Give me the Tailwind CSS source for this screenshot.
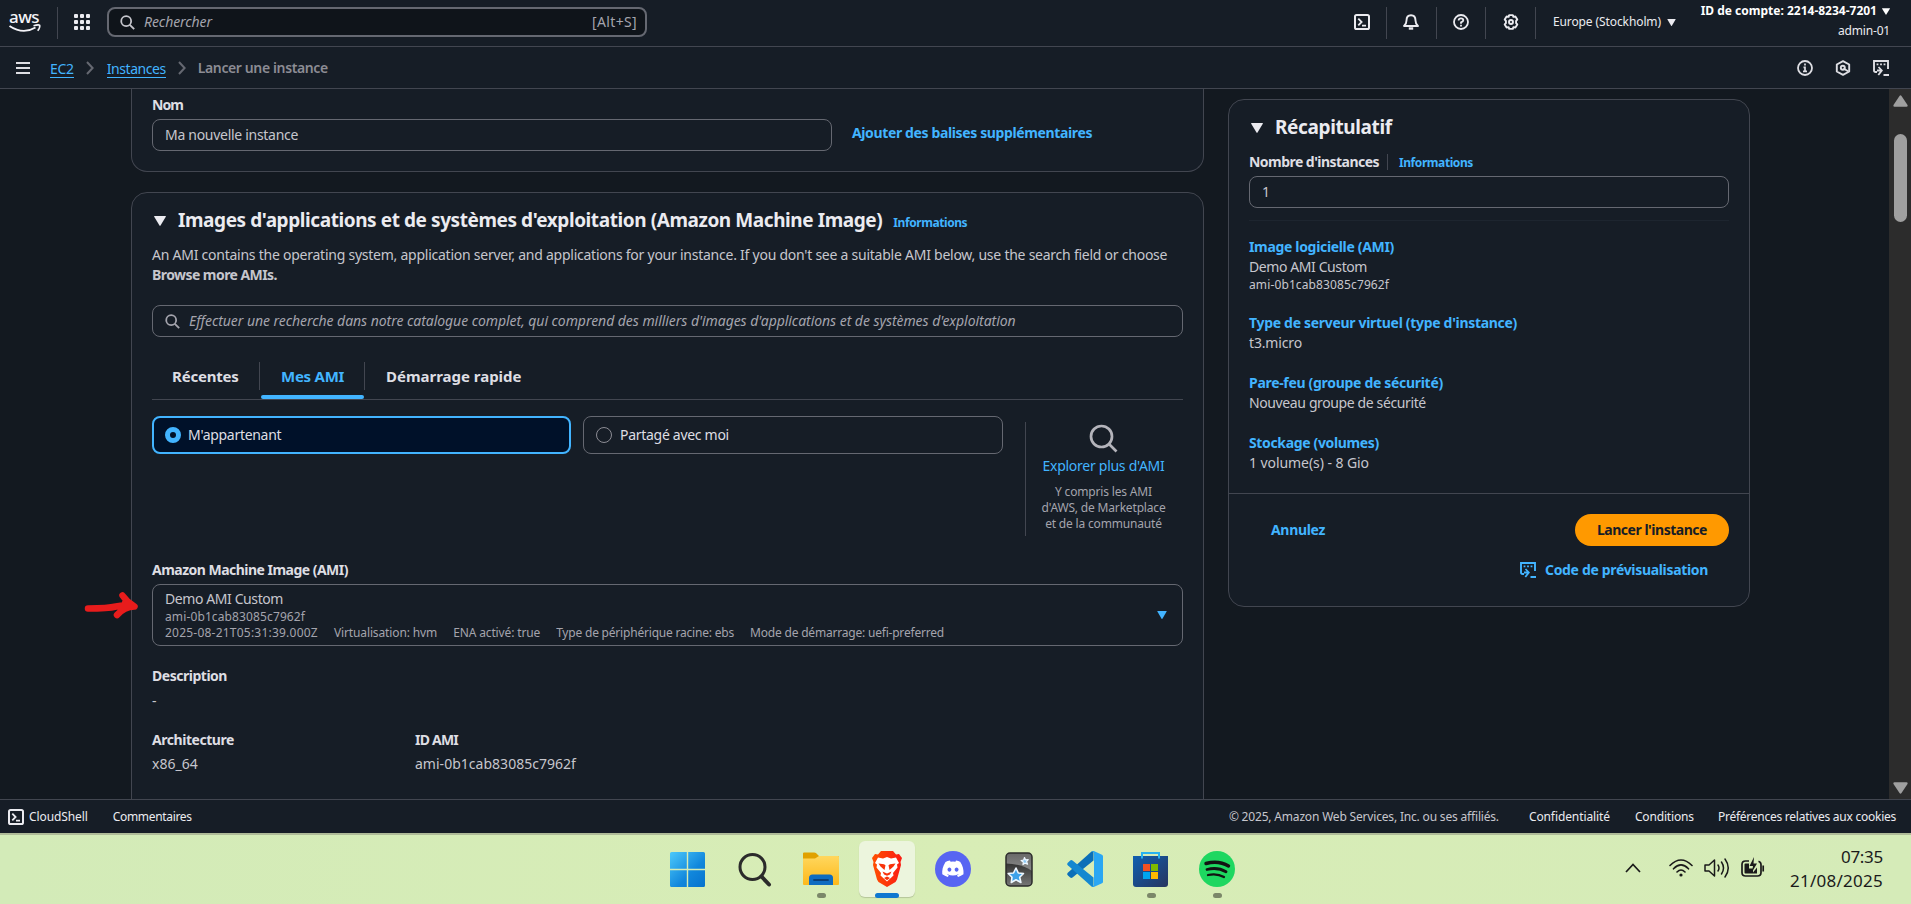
<!DOCTYPE html>
<html lang="fr">
<head>
<meta charset="utf-8">
<title>Lancer une instance | EC2</title>
<script src="https://cdn.jsdelivr.net/npm/@tailwindcss/browser@4"></script>
</head>
<body class="w-[1911px] h-[904px] overflow-hidden bg-[#131920] font-['Noto_Sans','Open_Sans',sans-serif] text-[14px] leading-5 text-[#c6c6cd] whitespace-nowrap">
<svg class="hidden">
  <defs>
    <symbol id="shell" viewBox="0 0 16 16"><rect x="1" y="1" width="14" height="14" rx="1.6" fill="none" stroke="currentColor" stroke-width="2"/><path d="M4.300 4.600 7.600 8l-3.300 3.400M8 11.600h4" fill="none" stroke="currentColor" stroke-width="1.800"/></symbol>
    <symbol id="glass" viewBox="0 0 16 16"><circle cx="6.600" cy="6.600" r="5.300" fill="none" stroke="currentColor" stroke-width="1.900"/><path d="m10.500 10.500 4.600 4.600" stroke="currentColor" stroke-width="2"/></symbol>
    <symbol id="tri" viewBox="0 0 12 10"><path d="M.6 0h10.800q.8 0 .4.700L6.500 9.600q-.5.700-1 0L.2.700Q-.2 0 .6 0z" fill="currentColor"/></symbol>
    <symbol id="code" viewBox="0 0 16 16"><path d="M4 12H2.500Q1 12 1 10.500V1h14v8" fill="none" stroke="currentColor" stroke-width="1.900"/><path d="M3.600 3.500h1.800v1.800H3.600zM7.100 3.500h1.800v1.800H7.100zM10.600 3.500h1.800v1.800h-1.800z" fill="currentColor"/><path d="M4 10.500h5M5.500 7l3.300 3.500L5.300 15" fill="none" stroke="currentColor" stroke-width="1.800"/><path d="M10.500 15H16" stroke="currentColor" stroke-width="2"/></symbol>
    <symbol id="chev" viewBox="0 0 8 14"><path d="m1 1 5.600 6L1 13" fill="none" stroke="currentColor" stroke-width="2"/></symbol>
  </defs>
</svg>

<header class="h-[47px] flex items-center border-b border-[#424650] bg-[#161d26] text-[#ebebf0]">
  <div class="relative ml-2 w-[34px] h-[36px] shrink-0">
    <span class="block pl-px text-[17px] leading-6 font-medium tracking-[-0.55px] text-[#f4f4f8]">aws</span>
    <svg class="absolute left-0 top-[16px] w-[34px] h-[14px]" viewBox="0 14 34 14"><path d="M1.500 19Q15 28 27.500 20.500" fill="none" stroke="#f4f4f8" stroke-width="1.900"/><path d="M25.500 18.800q5-1.500 6.200-.5.600 2-2 5.500" fill="none" stroke="#f4f4f8" stroke-width="1.600"/></svg>
  </div>
  <div class="ml-[15px] w-px h-8 bg-[#424650]"></div>
  <div class="ml-4 -mt-[2px] grid grid-cols-3 gap-[2px]">
    <i class="size-1 bg-current rounded-[1px]"></i><i class="size-1 bg-current rounded-[1px]"></i><i class="size-1 bg-current rounded-[1px]"></i><i class="size-1 bg-current rounded-[1px]"></i><i class="size-1 bg-current rounded-[1px]"></i><i class="size-1 bg-current rounded-[1px]"></i><i class="size-1 bg-current rounded-[1px]"></i><i class="size-1 bg-current rounded-[1px]"></i><i class="size-1 bg-current rounded-[1px]"></i>
  </div>
  <div class="ml-[17px] -mt-[2px] w-[540px] h-[30px] rounded-lg border-2 border-[#656871] bg-[#0f141a] flex items-center pl-[11px] pr-2">
    <svg class="size-[15px] text-[#c6c6cd]"><use href="#glass"/></svg>
    <span class="ml-[9px] italic text-[#a4a4ad] tracking-[-0.07px]">Rechercher</span>
    <span class="ml-auto text-[#a4a4ad] tracking-[0.35px]">[Alt+S]</span>
  </div>
  <div class="ml-auto flex items-center h-full">
    <svg class="size-4 mr-4 -mt-[2px]"><use href="#shell"/></svg><div class="w-px h-8 bg-[#424650]"></div>
    <svg class="size-4 ml-4 mr-4 -mt-[2px]" viewBox="0 0 16 16" fill="none" stroke="currentColor" stroke-width="1.900"><path d="M1 12h14q-2.500-2-2.500-5.500C12.500 3 11 1.200 8 1.200S3.500 3 3.500 6.500Q3.500 10 1 12z" stroke-linejoin="round"/><path d="M5.800 14.500h4.400" stroke-width="2.400"/></svg><div class="ml-px w-px h-8 bg-[#424650]"></div>
    <svg class="size-4 ml-4 mr-4 -mt-[2px]" viewBox="0 0 16 16" fill="none" stroke="currentColor" stroke-width="1.800"><circle cx="8" cy="8" r="7"/><path d="M5.600 6.500Q5.700 4.400 8 4.400t2.300 1.900Q10.300 7.500 8 8.300V9.700"/><path d="M7.100 10.800h1.800v1.600H7.100z" fill="currentColor" stroke="none"/></svg><div class="w-px h-8 bg-[#424650]"></div>
    <svg class="size-4 ml-[17px] mr-4 -mt-[2px]" viewBox="0 0 16 16" fill="none" stroke="currentColor" stroke-width="1.900"><path d="M6.200 1.100h3.600l.6 1.800 2-.4 1.900 3-1.200 1.300v2.400l1.200 1.300-1.900 3-2-.4-.6 1.800H6.200l-.6-1.800-2 .4-1.900-3 1.200-1.300V6.800L1.700 5.500l1.900-3 2 .4z" stroke-linejoin="round"/><circle cx="8" cy="8" r="2"/></svg><div class="w-px h-8 bg-[#424650]"></div>
    <span class="ml-[17px] text-[12px] -mt-[2px] tracking-[-0.1px]">Europe (Stockholm)</span>
    <svg class="ml-[6px] mr-px w-[9px] h-[7px] -mt-[2px]"><use href="#tri"/></svg>
    <div class="w-[213px] mr-[21px] h-full pt-[1px] text-[12px] flex flex-col items-end">
      <div class="flex items-center h-5 font-bold text-white"><span>ID de compte: 2214-8234-7201</span><svg class="ml-[5px] w-[8px] h-[7px]"><use href="#tri"/></svg></div>
      <span class="h-5 leading-[19px] tracking-[-0.18px]">admin-01</span>
    </div>
  </div>
</header>

<nav class="h-[42px] flex items-center border-b border-[#424650] bg-[#161d26] text-[#dedee3]">
  <div class="ml-4 flex flex-col gap-[3px]"><i class="w-[14px] h-[2px] bg-current"></i><i class="w-[14px] h-[2px] bg-current"></i><i class="w-[14px] h-[2px] bg-current"></i></div>
  <span class="ml-5 mt-px h-[19px] leading-[19px] border-b border-[#42b4ff] text-[#42b4ff] tracking-[-0.3px]">EC2</span>
  <svg class="ml-3 w-2 h-[14px] text-[#656871]"><use href="#chev"/></svg>
  <span class="ml-[13px] mt-px h-[19px] leading-[19px] border-b border-[#42b4ff] text-[#42b4ff] tracking-[-0.44px]">Instances</span>
  <svg class="ml-3 w-2 h-[14px] text-[#656871]"><use href="#chev"/></svg>
  <span class="ml-3 font-semibold text-[#8c8c94] tracking-[-0.38px]">Lancer une instance</span>
  <div class="ml-auto mr-[22px] flex gap-[22px]">
    <svg class="size-4" viewBox="0 0 16 16" fill="none" stroke="currentColor" stroke-width="1.800"><circle cx="8" cy="8" r="7"/><path d="M8 3.600v1.900M6.500 7.300H8v4M6 11.400h4" stroke-width="1.700"/></svg>
    <svg class="size-4" viewBox="0 0 16 16" fill="none" stroke="currentColor" stroke-width="1.900"><path d="M8 1.100 14.200 4.500v7L8 14.900 1.800 11.500v-7z" stroke-linejoin="round"/><circle cx="7.800" cy="7.800" r="2"/><path d="m8.500 8.500 5 3"/></svg>
    <svg class="size-4"><use href="#code"/></svg>
  </div>
</nav>

<main class="h-[710px] flex overflow-hidden">
  <div class="ml-[131px] w-[1073px] shrink-0">
    <section class="h-[83px] px-5 pt-[6px] border border-t-0 border-[#424650] rounded-b-2xl bg-[#161d26]">
      <div class="h-5 font-bold text-[#dedee3] tracking-[-0.93px]">Nom</div>
      <div class="mt-1 flex">
        <div class="w-[680px] h-8 rounded-lg border border-[#656871] flex items-center pl-3 tracking-[-0.29px]">Ma nouvelle instance</div>
        <span class="ml-5 mt-1 font-bold text-[#42b4ff] tracking-[-0.37px]">Ajouter des balises supplémentaires</span>
      </div>
    </section>
    <section class="relative mt-5 h-[640px] px-5 pt-4 border border-[#424650] rounded-t-2xl bg-[#161d26]">
      <div class="h-6 flex items-center">
        <svg class="ml-[2px] w-3 h-[10px] text-[#ebebf0]"><use href="#tri"/></svg>
        <h2 class="ml-3 -mt-[2px] text-[19px] leading-6 font-bold text-[#ebebf0] tracking-[-0.42px]">Images d'applications et de systèmes d'exploitation (Amazon Machine Image)</h2>
        <span class="ml-[11px] mt-1 text-[12px] font-bold text-[#42b4ff] tracking-[-0.42px]">Informations</span>
      </div>
      <div class="mt-3 tracking-[-0.245px]">An AMI contains the operating system, application server, and applications for your instance. If you don't see a suitable AMI below, use the search field or choose<br><b class="tracking-[-0.56px]">Browse more AMIs.</b></div>
      <div class="mt-5 h-8 rounded-lg border border-[#656871] flex items-center pl-3 text-[#a4a4ad]">
        <svg class="size-[15px]"><use href="#glass"/></svg>
        <span class="ml-[9px] italic tracking-[-0.05px]">Effectuer une recherche dans notre catalogue complet, qui comprend des milliers d'images d'applications et de systèmes d'exploitation</span>
      </div>
      <div class="mt-5 h-[43px] border-b border-[#424650] flex text-[15px] font-bold text-[#dedee3]">
        <div class="w-[108px] h-7 mt-[5px] pl-5 border-r border-[#424650] leading-[29px] tracking-[-0.2px]">Récentes</div>
        <div class="ml-px w-[104px] text-[#42b4ff]">
          <div class="h-7 mt-[5px] pl-5 leading-[29px] border-r border-[#424650] tracking-[-0.25px]">Mes AMI</div>
          <div class="mt-[5px] w-[103px] h-1 rounded-sm bg-[#42b4ff]"></div>
        </div>
        <div class="h-7 mt-[5px] pl-[21px] leading-[29px] tracking-[-0.02px]">Démarrage rapide</div>
      </div>
      <div class="mt-4 h-[144px] flex text-[#dedee3]">
        <div class="w-[419px] h-[38px] rounded-lg border-2 border-[#42b4ff] bg-[#001129] flex items-center pl-[11px]"><i class="size-4 rounded-full border-[5px] border-[#42b4ff]"></i><span class="ml-[7px] tracking-[-0.3px]">M'appartenant</span></div>
        <div class="ml-3 w-[420px] h-[38px] rounded-lg border border-[#656871] flex items-center pl-3"><i class="size-4 rounded-full border border-[#8c8c94]"></i><span class="ml-2 tracking-[-0.29px]">Partagé avec moi</span></div>
        <div class="ml-[22px] mt-[6px] w-[156px] h-[114px] border-l border-[#424650] flex flex-col items-center text-[#a4a4ad] text-[12px] leading-4 tracking-[-0.17px]">
          <svg class="mt-[2px] size-[29px] text-[#b4b4bb]" viewBox="0 0 29 29" fill="none" stroke="currentColor" stroke-width="2.700"><circle cx="12.500" cy="12.500" r="10.500"/><path d="m20 20 7.500 7.500"/></svg>
          <span class="mt-[3px] text-[14px] leading-5 text-[#42b4ff] tracking-[-0.27px]">Explorer plus d'AMI</span>
          <span class="mt-2">Y compris les AMI</span><span>d'AWS, de Marketplace</span><span>et de la communauté</span>
        </div>
      </div>
      <div class="h-5 font-bold text-[#dedee3] tracking-[-0.52px]">Amazon Machine Image (AMI)</div>
      <div class="mt-1 h-[62px] rounded-lg border border-[#656871] flex items-center justify-between pl-3 pr-[15px]">
        <div class="text-[12px] leading-4 text-[#a4a4ad]">
          <div class="text-[14px] leading-5 text-[#c6c6cd] tracking-[-0.41px]">Demo AMI Custom</div>
          <div class="tracking-[0.12px]">ami-0b1cab83085c7962f</div>
          <div class="flex gap-4"><span class="tracking-[0.22px]">2025-08-21T05:31:39.000Z</span><span class="tracking-[-0.12px]">Virtualisation: hvm</span><span class="tracking-[-0.14px]">ENA activé: true</span><span class="tracking-[-0.2px]">Type de périphérique racine: ebs</span><span class="tracking-[-0.2px]">Mode de démarrage: uefi-preferred</span></div>
        </div>
        <svg class="w-[10px] h-2 text-[#42b4ff]"><use href="#tri"/></svg>
      </div>
      <div class="mt-5 font-bold text-[#dedee3] tracking-[-0.48px]">Description</div>
      <div class="mt-[5px]">-</div>
      <div class="mt-[19px] flex">
        <div class="w-[263px]"><div class="font-bold text-[#dedee3] tracking-[-0.45px]">Architecture</div><div class="mt-1">x86_64</div></div>
        <div><div class="font-bold text-[#dedee3] tracking-[-0.78px]">ID AMI</div><div class="mt-1 tracking-[0.02px]">ami-0b1cab83085c7962f</div></div>
      </div>
      <svg class="absolute -left-[49px] top-[393px] w-[56px] h-[34px]" viewBox="0 0 56 34" fill="none" stroke="#e81c1c" stroke-width="6.500" stroke-linecap="round" stroke-linejoin="round"><path d="M5 22.500Q25 22.500 33 20.500 42 18.500 51 20.500M39.500 9.500Q44 16 51.500 20.500 41 21 34 29M42 17l5 3"/></svg>
    </section>
  </div>

  <aside class="ml-6 mt-[10px] w-[522px] h-[508px] shrink-0 border border-[#424650] rounded-2xl bg-[#161d26]">
    <div class="h-[394px] px-5 pt-4 border-b border-[#424650]">
      <div class="h-6 flex items-center text-[#ebebf0]"><svg class="ml-[2px] w-3 h-[10px]"><use href="#tri"/></svg><h2 class="ml-3 -mt-[2px] text-[19px] leading-6 font-bold tracking-[-0.37px]">Récapitulatif</h2></div>
      <div class="mt-3 h-5 flex items-center"><b class="text-[#dedee3] tracking-[-0.54px]">Nombre d'instances</b><i class="ml-2 w-px h-4 bg-[#424650]"></i><span class="ml-[11px] mt-px text-[12px] font-bold text-[#42b4ff] tracking-[-0.42px]">Informations</span></div>
      <div class="mt-1 h-8 rounded-lg border border-[#656871] pl-3 leading-[30px]">1</div>
      <div class="mt-3 border-t border-[#1d252f]"></div>
      <div class="mt-4 text-[#42b4ff] font-bold tracking-[-0.33px]">Image logicielle (AMI)</div>
      <div class="tracking-[-0.41px]">Demo AMI Custom</div>
      <div class="text-[12px] leading-4 tracking-[0.12px]">ami-0b1cab83085c7962f</div>
      <div class="mt-5 text-[#42b4ff] font-bold tracking-[-0.31px]">Type de serveur virtuel (type d'instance)</div>
      <div class="tracking-[-0.15px]">t3.micro</div>
      <div class="mt-5 text-[#42b4ff] font-bold tracking-[-0.31px]">Pare-feu (groupe de sécurité)</div>
      <div class="tracking-[-0.38px]">Nouveau groupe de sécurité</div>
      <div class="mt-5 text-[#42b4ff] font-bold tracking-[-0.35px]">Stockage (volumes)</div>
      <div class="tracking-[-0.07px]">1 volume(s) - 8 Gio</div>
    </div>
    <div class="px-5 pt-5 font-bold text-[#42b4ff]">
      <div class="flex items-center justify-between"><span class="ml-[22px] tracking-[-0.33px]">Annulez</span><button class="w-[154px] h-8 rounded-full bg-[#ff9900] text-[#161d26] tracking-[-0.48px]">Lancer l'instance</button></div>
      <div class="mt-[14px] flex items-center justify-end pr-[21px] gap-[9px]"><svg class="size-4"><use href="#code"/></svg><span class="tracking-[-0.33px]">Code de prévisualisation</span></div>
    </div>
  </aside>

  <div class="ml-auto w-[22px] shrink-0 bg-[#2c2c2c] flex flex-col items-center text-[#9f9f9f]">
    <svg class="mt-[6px] w-[15px] h-3" viewBox="0 0 15 12"><path d="M6.500 1q1-1.300 2 0l6 9q.6 1.700-1 1.800h-12Q0 11.700.5 10z" fill="currentColor"/></svg>
    <div class="mt-[27px] w-[13px] h-[88px] rounded-full bg-[#9f9f9f]"></div>
    <svg class="mt-auto mb-[5px] w-[15px] h-3 rotate-180" viewBox="0 0 15 12"><path d="M6.500 1q1-1.300 2 0l6 9q.6 1.700-1 1.800h-12Q0 11.700.5 10z" fill="currentColor"/></svg>
  </div>
</main>

<footer class="h-[34px] flex items-center border-t border-[#424650] bg-[#161d26] text-[12px] text-[#ebebf0]">
  <svg class="ml-2 size-4"><use href="#shell"/></svg><span class="ml-[5px] tracking-[-0.1px]">CloudShell</span><span class="ml-[25px] tracking-[-0.32px]">Commentaires</span>
  <div class="ml-auto mr-[15px] flex"><span class="mr-[30px] text-[#c6c6cd] tracking-[-0.18px]">© 2025, Amazon Web Services, Inc. ou ses affiliés.</span><span class="mr-[25px] tracking-[-0.1px]">Confidentialité</span><span class="mr-[24px] tracking-[-0.16px]">Conditions</span><span class="tracking-[-0.25px]">Préférences relatives aux cookies</span></div>
</footer>

<div class="h-[71px] border-t-2 border-[#afbb98] bg-linear-to-r from-[#d3ebb8] via-[#d8edb6] to-[#d5ebb8] flex text-[#1a1a1a]">
  <div class="ml-[659px] pt-[6px] flex gap-[10px]">
    <div class="w-[57px] h-14 flex items-center justify-center">
      <svg class="size-[35px]" viewBox="0 0 35 35"><defs><linearGradient id="w" x1="0" y1="0" x2="35" y2="35" gradientUnits="userSpaceOnUse"><stop stop-color="#4cc9fb"/><stop offset=".6" stop-color="#1187dc"/><stop offset="1" stop-color="#0672cd"/></linearGradient></defs><path d="M1.500 0H16.800V16.800H0V1.500Q0 0 1.500 0zM18.200 0H33.500Q35 0 35 1.500V16.800H18.200zM0 18.200H16.800V35H1.500Q0 35 0 33.500zM18.200 18.200H35V33.500Q35 35 33.500 35H18.200z" fill="url(#w)"/></svg>
    </div>
    <div class="w-[57px] h-14 flex items-center justify-center">
      <svg class="size-[35px]" viewBox="0 0 35 35" fill="none" stroke="#2b2b2b"><circle cx="15.500" cy="15" r="12.500" stroke-width="3"/><path d="m24.500 24.500 7.500 8" stroke-width="4" stroke-linecap="round"/></svg>
    </div>
    <div class="w-14 h-14 relative flex items-center justify-center">
      <svg class="w-9 h-[34px]" viewBox="0 0 36 34"><defs><linearGradient id="f" x1="0" y1="0" x2="0" y2="1"><stop stop-color="#ffd75e"/><stop offset="1" stop-color="#fdb91a"/></linearGradient></defs><path d="M0 1.500Q0 .5 1 .5h10q1.500 0 2.500 1L16 4h19q1 0 1 1v5H0z" fill="#e0a100"/><path d="M0 6.500h12L16 4h19q1 0 1 1v27q0 1-1 1H1q-1 0-1-1z" fill="url(#f)"/><path d="M6 33v-7q0-3.500 3.500-3.500h17q3.500 0 3.500 3.500v7z" fill="#0f6cc0"/><path d="M11 28h14" stroke="#0a3f78" stroke-width="1.800" stroke-linecap="round"/></svg>
      <i class="absolute left-[24px] top-[52px] w-[9px] h-[5px] rounded-full bg-[#7b8769]"></i>
    </div>
    <div class="w-14 h-14 relative flex items-center justify-center rounded-md bg-[#ecf5dd] shadow-[0_1px_1px_#b5c59a]">
      <svg class="w-[30px] h-9" viewBox="0 0 30 36"><defs><linearGradient id="b"><stop stop-color="#ff5000"/><stop offset="1" stop-color="#fb1c14"/></linearGradient></defs><path d="M9 0h12l3 3.500 3-.5 3 4-1.500 4 .5 3-4 14.500-1.500 2.500L15 36l-8.500-5L5 28.500 1 14l.500-3L0 7l3-4 3 .5z" fill="url(#b)"/><path d="m6 6.500 5 1L15 6l4 1.500 5-1 3 5.500-2 1.500.5 3-4.500 5.500.5 2.500-6.500 6-6.500-6 .5-2.500-4.500-5.500.5-3L3 12z" fill="#fff"/><path d="m6.500 12.500 5.500.8 1.500 1L12.500 19 8.500 15.500zM23.500 12.500l-5.500.8-1.500 1 1 4.700 4-3.500zM10.500 20.500l4.500 2 4.500-2-1.500 3-3 1.200-3-1.200zM12 27l3-1.500L18 27l-3 2.300z" fill="#f8330c"/></svg>
      <i class="absolute left-4 top-[52px] w-6 h-[5px] rounded-full bg-[#0f78d0]"></i>
    </div>
    <div class="w-14 h-14 flex items-center justify-center">
      <svg class="size-9" viewBox="0 0 36 36"><circle cx="18" cy="18" r="18" fill="#5865f2"/><path transform="translate(7.200 7) scale(.9)" d="M20.317 4.370a19.791 19.791 0 0 0-4.885-1.515.074.074 0 0 0-.079.037c-.210.375-.444.864-.608 1.250a18.270 18.270 0 0 0-5.487 0 12.640 12.640 0 0 0-.617-1.250.077.077 0 0 0-.079-.037A19.736 19.736 0 0 0 3.677 4.370C.533 9.046-.320 13.580.099 18.058a.082.082 0 0 0 .031.057 19.900 19.900 0 0 0 5.993 3.030c.462-.630.874-1.295 1.226-1.994-.652-.247-1.274-.549-1.872-.892l.372-.292c3.928 1.793 8.180 1.793 12.062 0l.373.292a12.300 12.300 0 0 1-1.873.892c.36.698.772 1.362 1.225 1.993a19.840 19.840 0 0 0 6.002-3.030c.5-5.177-.838-9.674-3.549-13.660zM8.020 15.330c-1.183 0-2.157-1.085-2.157-2.419s.956-2.419 2.157-2.419c1.210 0 2.176 1.096 2.157 2.420 0 1.333-.956 2.418-2.157 2.418zm7.975 0c-1.183 0-2.157-1.085-2.157-2.419s.955-2.419 2.157-2.419c1.210 0 2.176 1.096 2.157 2.420 0 1.333-.946 2.418-2.157 2.418z" fill="#fff"/></svg>
    </div>
    <div class="w-14 h-14 flex items-center justify-center">
      <svg class="w-[28px] h-[35px]" viewBox="0 0 28 35"><defs><linearGradient id="a" x1="0" y1="0" x2="0" y2="1"><stop stop-color="#686868"/><stop offset=".45" stop-color="#858585"/><stop offset="1" stop-color="#8a8a8a"/></linearGradient><linearGradient id="a2" x1="0" y1="0" x2="0" y2="1"><stop stop-color="#333"/><stop offset="1" stop-color="#777"/></linearGradient></defs><rect x="1" y="1" width="26" height="33" rx="4" fill="url(#a)"/><path d="M1 11.500Q17 12 27 19v11q0 4-4 4H5q-4 0-4-4z" fill="url(#a2)"/><rect x="1" y="1" width="26" height="33" rx="4" fill="none" stroke="#2b2b2b" stroke-width="1.500"/><path d="M11 16l2.300 5 5.200.5-3.800 3.700 1.200 5.300L11 27.800l-4.700 2.700L7 25.200l-3.800-3.700 5.300-.5z" fill="#3fa2ea" stroke="#eef7ff" stroke-width="1.600" stroke-linejoin="round"/><path d="m19.500 5.500 1 2.300 2.700-.2-1.600 2 1 2.500-2.500-1-2.100 1.500.3-2.600-2.200-1.500 2.600-.5z" fill="#8cc8f5" stroke="#eef7ff" stroke-width="1.200" stroke-linejoin="round"/></svg>
    </div>
    <div class="w-14 h-14 flex items-center justify-center">
      <svg class="size-9" viewBox="0 0 36 36"><path d="M26.500 0v9.500L5.500 26.500q-1.200.8-2.300 0L.8 24.300q-1.200-1.300 0-2.600L24.500.6Q25.500 0 26.500 0z" fill="#0b6fb8"/><path d="M26.500 36v-9.500L5.500 9.500q-1.200-.8-2.300 0L.8 11.700q-1.200 1.300 0 2.600l23.700 21.100q1 .6 2 .6z" fill="#1488d0"/><path d="M26.800 0 35 3.700q1 .5 1 1.500v25.600q0 1-1 1.500L26.800 36q-1.500.2-2.500-.7 2.200.8 2.700-1.600V2.300Q26.500-.1 24.300.7q1-.9 2.500-.7z" fill="#2aa7f3"/></svg>
    </div>
    <div class="w-14 h-14 relative flex items-center justify-center">
      <svg class="-ml-px size-[35px]" viewBox="0 0 35 35"><defs><linearGradient id="s" x1="0" y1="0" x2="1" y2="1"><stop stop-color="#0f5fb0"/><stop offset="1" stop-color="#27355f"/></linearGradient></defs><path d="M0 4h35v28q0 3-3 3H3q-3 0-3-3z" fill="url(#s)"/><path d="M9 6.500V1h17v5.500" fill="none" stroke="#27b3f0" stroke-width="2"/><path d="M10 12h7v7h-7z" fill="#f25022"/><path d="M18 12h7v7h-7z" fill="#7fba00"/><path d="M10 20h7v7h-7z" fill="#00a4ef"/><path d="M18 20h7v7h-7z" fill="#ffb900"/></svg>
      <i class="absolute left-6 top-[52px] w-[9px] h-[5px] rounded-full bg-[#7b8769]"></i>
    </div>
    <div class="w-14 h-14 relative flex items-center justify-center">
      <svg class="size-9" viewBox="0 0 36 36"><circle cx="18" cy="18" r="18" fill="#1ed760"/><g fill="none" stroke="#121212" stroke-linecap="round"><path d="M7 12.500q12.500-3.500 22.500 2.500" stroke-width="3.400"/><path d="M8 18.500q10.500-2.800 19 2.300" stroke-width="2.800"/><path d="M9 24q9-2 16 2" stroke-width="2.300"/></g></svg>
      <i class="absolute left-6 top-[52px] w-[9px] h-[5px] rounded-full bg-[#7b8769]"></i>
    </div>
  </div>
  <div class="ml-auto mr-7 flex">
    <svg class="mt-[28px] w-4 h-[10px]" viewBox="0 0 16 10"><path d="m1 9 7-7.500L15 9" fill="none" stroke="currentColor" stroke-width="1.700"/></svg>
    <svg class="mt-[24px] ml-7 w-6 h-[18px]" viewBox="0 0 24 18" fill="none" stroke="currentColor" stroke-width="1.600" stroke-linecap="round"><path d="M1 6.500Q12-4.500 23 6.500M4.500 9.800Q12 2 19.500 9.800M8 13q4-4 8 0"/><circle cx="12" cy="16" r="1.600" fill="currentColor" stroke="none"/></svg>
    <svg class="mt-[23px] ml-[11px] w-[26px] h-[20px]" viewBox="0 0 26 20" fill="none" stroke="currentColor" stroke-width="1.500" stroke-linecap="round" stroke-linejoin="round"><path d="M1 7v6h4l5.500 5V2L5 7zM14 7q2 3 0 6M17.500 4q4 6 0 12M21 1q6.500 9 0 18"/></svg>
    <svg class="mt-[22px] ml-[11px] w-[24px] h-[20px]" viewBox="0 0 24 20" fill="none" stroke="currentColor" stroke-width="1.700"><path d="M8 4H4.500Q1 4 1 7.500v8Q1 19 4.500 19h12q3.500 0 3.500-3.500v-8Q20 5 17.500 4.200M22.200 8.500v6"/><path d="M3.500 7.500Q3.500 6.500 4.500 6.500H8v5h4v4l4-5v6h-11.500q-1 0-1-1z" fill="currentColor" stroke="none"/><path d="M13 0 8.500 9h3.500l-1 6 5-8.500h-3.500z" fill="currentColor" stroke="none"/></svg>
    <div class="ml-[25px] mt-[10px] flex flex-col items-end text-[17px] leading-6"><span class="tracking-[-0.29px]">07:35</span><span class="tracking-[0.25px]">21/08/2025</span></div>
  </div>
</div>
</body>
</html>
